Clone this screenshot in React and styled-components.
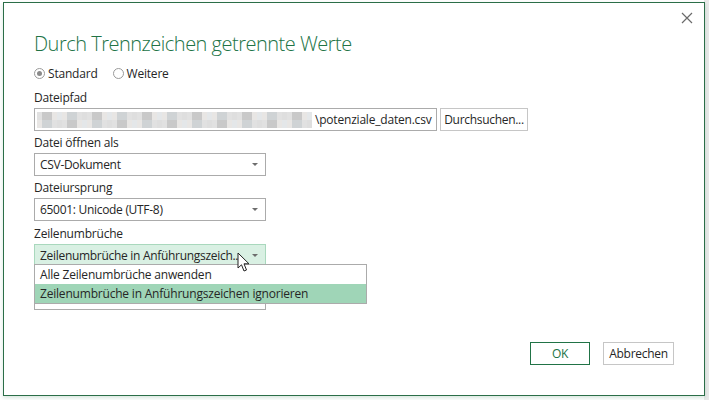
import React from "react";
import styled, { createGlobalStyle } from "styled-components";

const Global = createGlobalStyle`
  html, body { margin: 0; padding: 0; }
  body {
    width: 709px; height: 400px; overflow: hidden;
    background: #ffffff;
    font-family: "Open Sans", "Noto Sans", Arial, sans-serif;
    font-size: 12px; color: #262626;
  }
`;

const Page = styled.div`
  width: 709px; height: 400px;
  display: flex;
  padding: 2px 0 0 3px;
  box-sizing: border-box;
  background: linear-gradient(to left, #e9e9e9 5px, #ffffff 5px);
`;

const Dialog = styled.div`
  position: relative;
  width: 702px; height: 394px;
  box-sizing: border-box;
  border: 1px solid #2b6e48;
  background: #fff;
  box-shadow: 0 2px 4px rgba(33,115,70,0.18);
  display: flex; flex-direction: column;
  padding: 27px 30px 30px 30px;
`;

const Close = styled.div`
  position: absolute; top: 8px; right: 10px;
  width: 14px; height: 14px;
  display: flex; align-items: center; justify-content: center;
`;

const Title = styled.h1`
  margin: 0; font-family: "Open Sans", sans-serif; font-weight: 300;
  font-size: 20px; line-height: 28px; color: #217346; letter-spacing: -0.5px;
`;

const RadioRow = styled.div`
  display: flex; gap: 15px; margin-top: 6px; height: 18px; align-items: center;
`;

const RadioLabel = styled.label`
  display: flex; align-items: center; gap: 3px; letter-spacing: -0.2px;
`;

const RadioCircle = styled.span`
  width: 9px; height: 9px; border-radius: 50%;
  border: 1px solid #9a9a9a; background: #fff;
  display: flex; align-items: center; justify-content: center;
  &::after {
    content: ""; width: 5px; height: 5px; border-radius: 50%;
    background: ${(p) => (p.$checked ? "#8a8a8a" : "transparent")};
  }
`;

const Field = styled.div`
  display: flex; flex-direction: column;
  margin-top: ${(p) => p.$top ?? 4}px;
`;

const Label = styled.div`
  height: 16px; line-height: 16px; letter-spacing: -0.2px; margin-bottom: 2px;
`;

const Row = styled.div`
  display: flex; gap: 3px;
`;

const PathInput = styled.div`
  width: 403px; height: 23px; box-sizing: border-box;
  border: 1px solid #ababab;
  display: flex; align-items: center; padding: 0 1px 0 2px; overflow: hidden;
  letter-spacing: -0.2px; white-space: nowrap;
`;

const Mosaic = styled.div`
  display: grid; grid-template-columns: repeat(55, 5px); grid-template-rows: 8px 8px;
  margin-right: 3px; flex-shrink: 0;
`;

const Cell = styled.span`
  background: ${(p) => p.$c};
`;

const Button = styled.button`
  font: inherit; letter-spacing: -0.3px; white-space: nowrap;
  height: 23px; padding: 0; box-sizing: border-box;
  background: #fff; border: 1px solid ${(p) => (p.$primary ? "#217346" : "#c6c6c6")};
  color: ${(p) => (p.$primary ? "#217346" : "#262626")};
  width: ${(p) => p.$w}px;
`;

const SelectWrap = styled.div`
  position: relative; width: 232px;
`;

const Select = styled.div`
  width: 232px; height: 23px; box-sizing: border-box;
  border: 1px solid ${(p) => (p.$active ? "#a9d8bd" : "#ababab")};
  background: ${(p) => (p.$active ? "#d9f0e3" : "#fff")};
  display: flex; align-items: center; padding: 0 6px 0 5px;
  letter-spacing: -0.3px;
`;

const SelectText = styled.span`
  flex: 1; white-space: nowrap; overflow: hidden;
`;

const Arrow = styled.span`
  width: 0; height: 0;
  border-left: 3px solid transparent; border-right: 3px solid transparent;
  border-top: 3px solid #6d6d6d; margin-right: 1px;
`;

const Popup = styled.div`
  position: absolute; left: 0; top: 20px; z-index: 3;
  width: 333px; box-sizing: border-box;
  border: 1px solid #ababab; background: #fff;
  display: flex; flex-direction: column;
`;

const Option = styled.div`
  height: 19px; line-height: 19px; padding: 0 5px; letter-spacing: -0.2px;
  white-space: nowrap;
  background: ${(p) => (p.$selected ? "#9fd5b7" : "#fff")};
`;

const Cursor = styled.svg`
  position: absolute; left: 203px; top: 8px; z-index: 4;
`;

const Footer = styled.div`
  margin-top: auto; display: flex; justify-content: flex-end; gap: 13px;
`;

const shades = ["#e1e1e1", "#d5d5d5", "#ebebeb", "#cfd3d5", "#dedede", "#e8e6e4", "#d9dcde", "#f0f0f0", "#c9c9c9", "#e4e7e9"];
const cells = Array.from({ length: 110 }, (_, i) => shades[(i * 7 + ((i * i) % 5)) % shades.length]);

export default function App() {
  return (
    <>
      <Global />
      <Page>
        <Dialog>
          <Close>
            <svg width="12" height="12" viewBox="0 0 12 12">
              <path d="M1 1L11 11M11 1L1 11" stroke="#6a6a6a" strokeWidth="1.2" />
            </svg>
          </Close>
          <Title>Durch Trennzeichen getrennte Werte</Title>
          <RadioRow>
            <RadioLabel><RadioCircle $checked />Standard</RadioLabel>
            <RadioLabel><RadioCircle />Weitere</RadioLabel>
          </RadioRow>
          <Field $top={8}>
            <Label>Dateipfad</Label>
            <Row>
              <PathInput>
                <Mosaic>
                  {cells.map((c, i) => <Cell key={i} $c={c} />)}
                </Mosaic>
                <span>\potenziale_daten.csv</span>
              </PathInput>
              <Button $w={88}>Durchsuchen...</Button>
            </Row>
          </Field>
          <Field>
            <Label>Datei öffnen als</Label>
            <Select><SelectText>CSV-Dokument</SelectText><Arrow /></Select>
          </Field>
          <Field>
            <Label>Dateiursprung</Label>
            <Select><SelectText>65001: Unicode (UTF-8)</SelectText><Arrow /></Select>
          </Field>
          <Field $top={5}>
            <Label>Zeilenumbrüche</Label>
            <SelectWrap>
              <Select $active><SelectText>Zeilenumbrüche in Anführungszeich...</SelectText><Arrow /></Select>
              <Popup>
                <Option>Alle Zeilenumbrüche anwenden</Option>
                <Option $selected>Zeilenumbrüche in Anführungszeichen ignorieren</Option>
              </Popup>
              <Cursor width="14" height="21" viewBox="0 0 14 21">
                <path d="M1 1L1 16L4.5 12.8L7 19L9.5 18L7 11.8L12 11.8Z" fill="#fff" stroke="#222" strokeWidth="1" strokeLinejoin="round" />
              </Cursor>
            </SelectWrap>
          </Field>
          <Field $top={2}>
            <Label />
            <Select />
          </Field>
          <Footer>
            <Button $primary $w={60}>OK</Button>
            <Button $w={71}>Abbrechen</Button>
          </Footer>
        </Dialog>
      </Page>
    </>
  );
}
